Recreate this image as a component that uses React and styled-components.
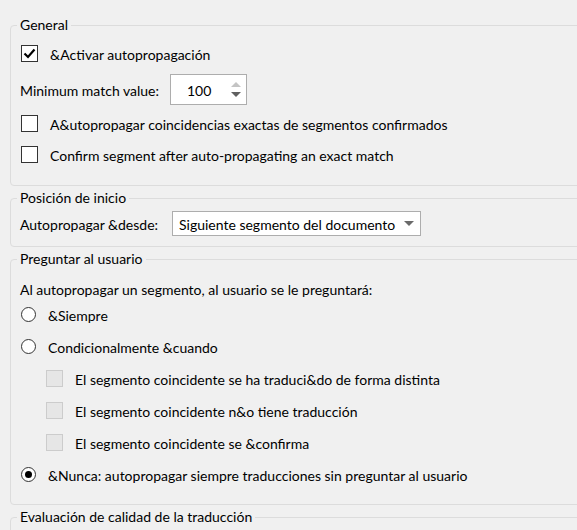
import styled, { createGlobalStyle } from "styled-components";

const GlobalStyle = createGlobalStyle`
  html, body {
    margin: 0;
    background: #f0f0f0;
  }
  body {
    font-family: Lato, "Liberation Sans", sans-serif;
    font-size: 14px;
    color: #000;
  }
`;

const Page = styled.div`
  width: 577px;
  height: 530px;
  overflow: hidden;
  box-sizing: border-box;
  padding: 17px 0 0 10px;
`;

const Group = styled.fieldset`
  margin: 0 -12px 4px 0;
  padding: 0 0 ${(p) => p.bottom}px 9px;
  border: 1px solid #dcdcdc;
  border-radius: 4px;
  min-width: 0;
`;

const Legend = styled.legend`
  margin-left: -3px;
  padding: 0 3px;
  line-height: 16px;
  height: 16px;
`;

const Row = styled.div`
  display: flex;
  align-items: center;
  height: ${(p) => p.h || 24}px;
  margin-top: ${(p) => p.top || 0}px;
  padding-left: ${(p) => p.indent || 0}px;
`;

const Label = styled.span`
  width: ${(p) => p.w}px;
  flex: none;
  padding-top: 2px;
`;

const Text = styled.span`
  margin-left: ${(p) => p.gap || 0}px;
  padding-top: 2px;
  white-space: nowrap;
`;

const Box = styled.span`
  flex: none;
  width: 15px;
  height: 15px;
  margin-left: 1px;
  border: 1px solid ${(p) => (p.disabled ? "#cccccc" : "#333333")};
  background: ${(p) => (p.disabled ? "#e6e6e6" : "#ffffff")};
  display: flex;
  align-items: center;
  justify-content: center;
`;

const Radio = styled.span`
  flex: none;
  width: 13px;
  height: 13px;
  margin-left: 1px;
  border: 1px solid #333333;
  border-radius: 50%;
  background: #fff;
  display: flex;
  align-items: center;
  justify-content: center;
`;

const Dot = styled.span`
  width: 7px;
  height: 7px;
  border-radius: 50%;
  background: #000;
`;

const Spin = styled.div`
  width: 77px;
  height: 31px;
  box-sizing: border-box;
  border: 1px solid #adadad;
  background: #fff;
  display: flex;
  align-items: center;
  padding-left: 16px;
`;

const SpinValue = styled.span`
  flex: 1;
  padding-top: 2px;
`;

const Arrows = styled.span`
  width: 20px;
  display: flex;
  flex-direction: column;
  align-items: center;
  gap: 5px;
`;

const Select = styled.div`
  width: 249px;
  height: 25px;
  box-sizing: border-box;
  border: 1px solid #adadad;
  background: #fff;
  display: flex;
  align-items: center;
  justify-content: space-between;
  padding: 0 6px 0 6px;
`;

const SelectText = styled.span`
  padding-top: 2px;
`;

const Intro = styled.div`
  height: 16px;
  line-height: 16px;
  margin-top: 14px;
  padding-top: 1px;
`;

function Tri({ up, color }) {
  return (
    <svg width="10" height="5" viewBox="0 0 10 5">
      <polygon points={up ? "0,5 10,5 5,0" : "0,0 10,0 5,5"} fill={color} />
    </svg>
  );
}

function Check({ checked, disabled }) {
  return (
    <Box disabled={disabled}>
      {checked && (
        <svg width="13" height="11" viewBox="0 0 13 11">
          <polyline points="1.5,5.5 5,9 11.5,1.5" fill="none" stroke="#000" strokeWidth="2.2" />
        </svg>
      )}
    </Box>
  );
}

function Option({ selected }) {
  return <Radio>{selected && <Dot />}</Radio>;
}

export default function App() {
  return (
    <>
      <GlobalStyle />
      <Page>
        <Group bottom={19}>
          <Legend>General</Legend>
          <Row top={8}>
            <Check checked />
            <Text gap={12}>&amp;Activar autopropagación</Text>
          </Row>
          <Row h={31} top={9}>
            <Label w={150}>Minimum match value:</Label>
            <Spin>
              <SpinValue>100</SpinValue>
              <Arrows>
                <Tri up color="#c4c4c4" />
                <Tri color="#606060" />
              </Arrows>
            </Spin>
          </Row>
          <Row top={6}>
            <Check />
            <Text gap={12}>A&amp;utopropagar coincidencias exactas de segmentos confirmados</Text>
          </Row>
          <Row top={7}>
            <Check />
            <Text gap={12}>Confirm segment after auto-propagating an exact match</Text>
          </Row>
        </Group>

        <Group bottom={10}>
          <Legend>Posición de inicio</Legend>
          <Row h={25} top={5}>
            <Label w={152}>Autopropagar &amp;desde:</Label>
            <Select>
              <SelectText>Siguiente segmento del documento</SelectText>
              <Tri color="#6a6a6a" />
            </Select>
          </Row>
        </Group>

        <Group bottom={14}>
          <Legend>Preguntar al usuario</Legend>
          <Intro>Al autopropagar un segmento, al usuario se le preguntará:</Intro>
          <Row h={32}>
            <Option />
            <Text gap={12}>&amp;Siempre</Text>
          </Row>
          <Row h={32}>
            <Option />
            <Text gap={12}>Condicionalmente &amp;cuando</Text>
          </Row>
          <Row h={32} indent={25}>
            <Check disabled />
            <Text gap={12}>El segmento coincidente se ha traduci&amp;do de forma distinta</Text>
          </Row>
          <Row h={32} indent={25}>
            <Check disabled />
            <Text gap={12}>El segmento coincidente n&amp;o tiene traducción</Text>
          </Row>
          <Row h={32} indent={25}>
            <Check disabled />
            <Text gap={12}>El segmento coincidente se &amp;confirma</Text>
          </Row>
          <Row h={32}>
            <Option selected />
            <Text gap={12}>&amp;Nunca: autopropagar siempre traducciones sin preguntar al usuario</Text>
          </Row>
        </Group>

        <Group bottom={40}>
          <Legend>Evaluación de calidad de la traducción</Legend>
        </Group>
      </Page>
    </>
  );
}
